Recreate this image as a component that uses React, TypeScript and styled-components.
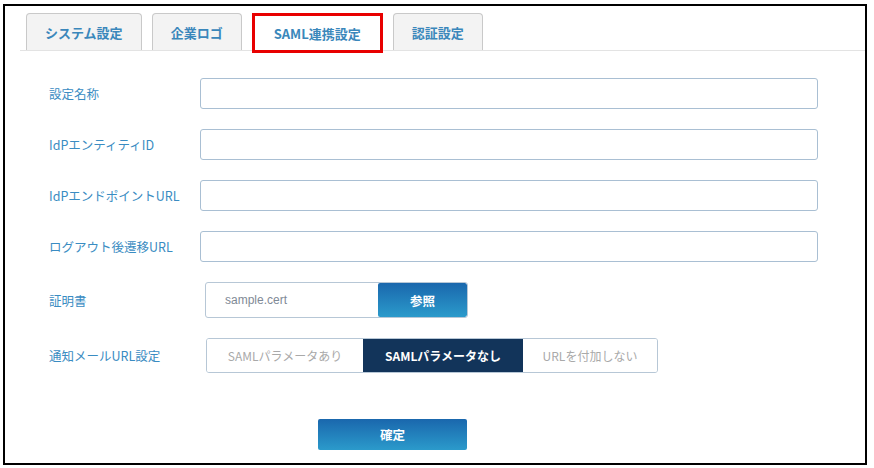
import React from "react";
import styled, { createGlobalStyle } from "styled-components";

const G = createGlobalStyle`
  body { margin: 0; background: #fff; font-family: "Noto Sans CJK JP", "Noto Sans", sans-serif; }
`;
const Frame = styled.div`
  position: relative; margin: 4px 0 0 3px; width: 860px; height: 457px;
  border: 2px solid #000; background: #fff; box-sizing: content-box;
`;
const TabBar = styled.div`
  display: flex; align-items: flex-end; gap: 10px; padding: 7px 0 0 6px;
  margin-left: 15px; border-bottom: 1px solid #e3e3e3; height: 37px; box-sizing: content-box;
`;
const Tab = styled.div<{ $active?: boolean }>`
  box-sizing: border-box; height: ${p => (p.$active ? 40 : 37)}px;
  margin-bottom: ${p => (p.$active ? -3 : 0)}px;
  padding: 0 ${p => (p.$active ? 19 : 18)}px;
  display: flex; align-items: center; justify-content: center;
  font-size: 13px; font-weight: bold; color: #3a87bb;
  background: ${p => (p.$active ? "#fff" : "#f3f3f3")};
  border: ${p => (p.$active ? "3px solid #e80000" : "1px solid #c9c9c9")};
  ${p => (p.$active ? "" : "border-bottom: none;")}
  border-radius: ${p => (p.$active ? "0" : "4px 4px 0 0")};
`;
const Form = styled.div`
  display: flex; flex-direction: column; padding: 27px 0 0 44px;
`;
const Row = styled.div<{ $h?: number; $mb?: number }>`
  display: flex; align-items: center; height: ${p => p.$h ?? 31}px; margin-bottom: ${p => p.$mb ?? 20}px;
`;
const Label = styled.div`
  width: 151px; font-size: 12.5px; color: #3a8cc2; flex-shrink: 0;
`;
const Input = styled.div`
  box-sizing: border-box; width: 618px; height: 31px; border: 1px solid #a9bfd3; border-radius: 3px; background: #fff;
`;
const Group = styled.div<{ $ml?: number }>`
  display: flex; margin-left: ${p => p.$ml ?? 0}px; height: 100%;
  border: 1px solid #b7c7d6; border-radius: 3px; overflow: hidden; box-sizing: border-box;
`;
const CertText = styled.div`
  width: 172px; display: flex; align-items: center; padding-left: 19px; box-sizing: border-box;
  font-size: 12px; color: #7f8a96; font-family: "Liberation Sans", "Noto Sans CJK JP", sans-serif;
`;
const BlueBtn = styled.div<{ $w: number }>`
  width: ${p => p.$w}px; height: 100%; display: flex; align-items: center; justify-content: center;
  background: linear-gradient(#1a67ad, #2b9acb); color: #fff; font-size: 12.5px; font-weight: bold;
  border-radius: 2px;
`;
const Seg = styled.div<{ $w: number; $on?: boolean }>`
  width: ${p => p.$w}px; display: flex; align-items: center; justify-content: center;
  font-size: 12px; color: ${p => (p.$on ? "#fff" : "#a9a9a9")}; font-weight: ${p => (p.$on ? "bold" : "normal")};
  background: ${p => (p.$on ? "#12345a" : "#fff")};
`;
const Footer = styled.div`
  display: flex; padding-left: 269px; margin-top: 46px; height: 31px;
`;

export default function App() {
  const fields = ["設定名称", "IdPエンティティID", "IdPエンドポイントURL", "ログアウト後遷移URL"];
  return (
    <>
      <G />
      <Frame>
        <TabBar>
          <Tab>システム設定</Tab>
          <Tab>企業ロゴ</Tab>
          <Tab $active>SAML連携設定</Tab>
          <Tab>認証設定</Tab>
        </TabBar>
        <Form>
          {fields.map(f => (
            <Row key={f}><Label>{f}</Label><Input /></Row>
          ))}
          <Row $h={36}>
            <Label>証明書</Label>
            <Group $ml={5}><CertText>sample.cert</CertText><BlueBtn $w={89}>参照</BlueBtn></Group>
          </Row>
          <Row $h={35} $mb={0}>
            <Label>通知メールURL設定</Label>
            <Group $ml={6}>
              <Seg $w={156}>SAMLパラメータあり</Seg>
              <Seg $w={160} $on>SAMLパラメータなし</Seg>
              <Seg $w={134}>URLを付加しない</Seg>
            </Group>
          </Row>
          <Footer><BlueBtn $w={149}>確定</BlueBtn></Footer>
        </Form>
      </Frame>
    </>
  );
}
